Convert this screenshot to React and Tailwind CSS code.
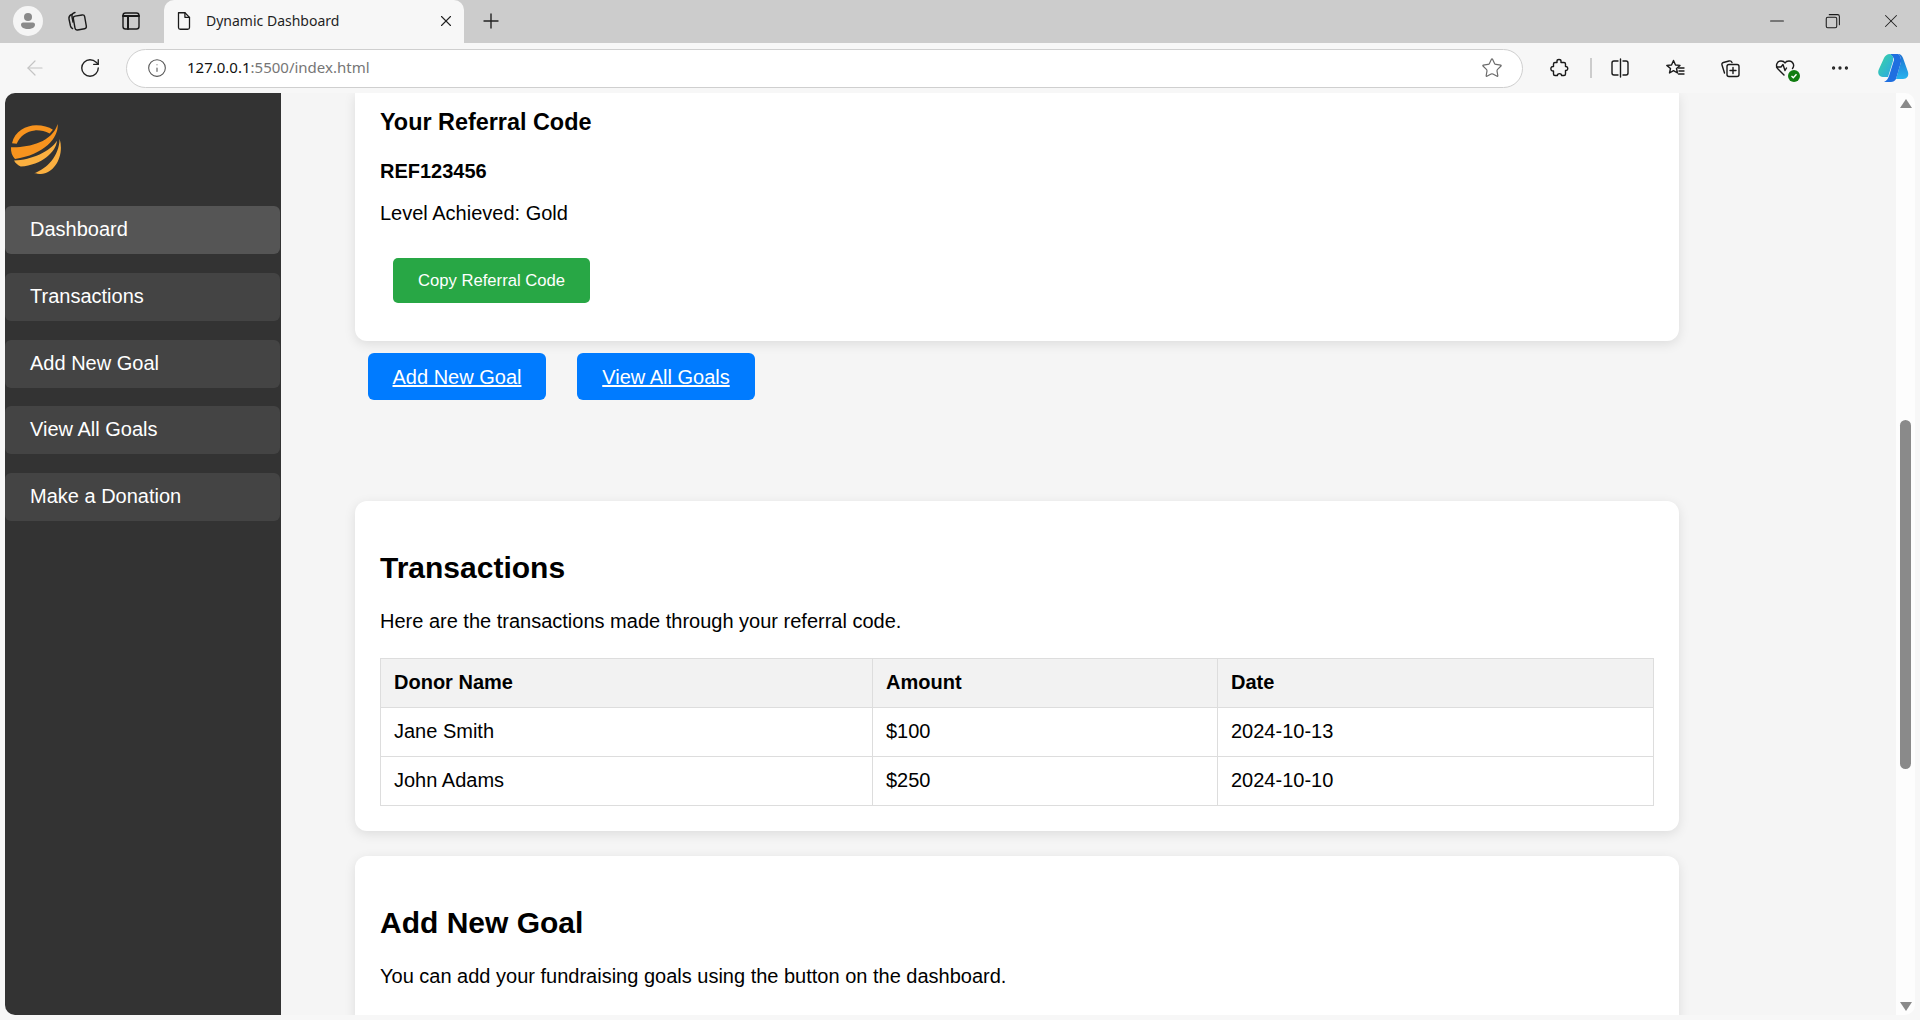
import { Plus, X, Minus, ArrowLeft, RotateCw, Info, Star, MoreHorizontal } from 'lucide-react';

const navItems = ['Dashboard', 'Transactions', 'Add New Goal', 'View All Goals', 'Make a Donation'];

const rows = [
  ['Jane Smith', '$100', '2024-10-13'],
  ['John Adams', '$250', '2024-10-10'],
];

// Drawn with the same stroke so the browser toolbar reads as one set
const Glyph = ({ children, size = 24, className = '' }) => (
  <svg width={size} height={size} viewBox="0 0 24 24" fill="none" stroke="#1a1a1a" strokeWidth="1.4" strokeLinecap="round" strokeLinejoin="round" className={className}>
    {children}
  </svg>
);

const Logo = () => (
  <svg width="52" height="52" viewBox="30 100 155 155" className="ml-[5px] block">
    <path d="M36 160 C44 125 78 107 108 107 C128 107 146 112 158 120 L148 131 C134 124 118 121 104 122 C80 124 60 138 50 162 Z" fill="#f7931e" />
    <path d="M33 172 C80 174 155 160 172 103 C176 145 130 195 45 207 C36 198 32 185 33 172 Z" fill="#f7931e" />
    <path d="M42 212 C95 210 150 185 170 153 C168 185 125 226 62 230 C54 226 46 220 42 212 Z" fill="#fbb040" />
    <path d="M103 250 C140 236 176 200 178 148 C192 195 165 250 122 252 C115 252 108 252 103 250 Z" fill="#fbb040" />
  </svg>
);

const TabStrip = () => (
  <div className="flex h-[43px] shrink-0 items-center bg-[#cccccc] pb-[2px]">
    <div className="ml-[13px] flex h-[30px] w-[30px] items-center justify-center rounded-full bg-[#f5f5f5]">
      <svg width="20" height="20" viewBox="0 0 20 20" fill="#8a8a8a">
        <circle cx="10" cy="6" r="4" />
        <path d="M3 13.5 C3 12 4.5 11.5 6 11.5 H14 C15.5 11.5 17 12 17 13.5 C17 16.5 14 18 10 18 C6 18 3 16.5 3 13.5 Z" />
      </svg>
    </div>
    <Glyph className="ml-[22px]">
      <rect x="9" y="6.5" width="11.5" height="14" rx="2.2" transform="rotate(-10 14.5 13)" />
      <path d="M6.5 5.5 C4.5 6.5 3.6 8 4 10 L5.5 17 C5.8 18.2 6.5 19 7.6 19.6" />
      <path d="M10 3.5 C8 4 6.6 5.5 7 8 L8 13" />
    </Glyph>
    <Glyph className="ml-[30px]">
      <rect x="4" y="4" width="16" height="16" rx="2.5" />
      <path d="M4 7 H20 M9 7 V20" strokeWidth="2" />
    </Glyph>
    <div className="-mb-[2px] ml-[21px] flex h-[43px] w-[300px] items-center rounded-t-[10px] bg-[#f7f7f7] pb-[2px] pl-[9px]">
      <Glyph size={22}>
        <path d="M6 3 H13 L18 8 V19 C18 20 17 21 16 21 H8 C7 21 6 20 6 19 Z" />
        <path d="M13 3 V8 H18" />
      </Glyph>
      <span className="ml-[11px] font-['Noto_Sans',sans-serif] text-[14px] text-[#1f1f1f]">Dynamic Dashboard</span>
      <X size={18} strokeWidth={1.5} color="#222" className="ml-auto mr-[9px]" />
    </div>
    <Plus size={24} strokeWidth={1.4} color="#222" className="ml-[15px]" />
    <Minus size={22} strokeWidth={1.1} color="#222" className="ml-auto mr-[36px]" />
    <Glyph size={18} className="mr-[38px]">
      <rect x="3" y="7" width="14" height="14" rx="2" />
      <path d="M7 3.5 H18 C19.5 3.5 20.5 4.5 20.5 6 V17" />
    </Glyph>
    <X size={22} strokeWidth={1.1} color="#222" className="mr-[18px]" />
  </div>
);

const Toolbar = () => (
  <div className="flex h-[50px] shrink-0 items-center bg-[#f7f7f7]">
    <ArrowLeft size={24} strokeWidth={1.2} color="#c4c4c4" className="ml-[23px]" />
    <RotateCw size={22} strokeWidth={1.5} color="#222" className="ml-[32px]" />
    <div className="ml-[25px] flex h-[39px] w-[1397px] items-center rounded-full border border-[#cfcfcf] bg-white pl-[20px]">
      <Info size={20} strokeWidth={1.3} color="#555" />
      <span className="ml-[20px] pb-[2px] font-['Noto_Sans',sans-serif] text-[15px] text-[#111]">
        127.0.0.1<span className="text-[#767676]">:5500/index.html</span>
      </span>
      <Star size={22} strokeWidth={1.3} color="#6b6b6b" className="ml-auto mr-[19px]" />
    </div>
    <Glyph className="ml-[24px]">
      <path d="M10 5 C10 3 14 3 14 5 V6.5 H17 C18 6.5 18.5 7 18.5 8 V10.5 C21.5 10 21.5 15 18.5 14.5 V18 C18.5 19 18 19.5 17 19.5 H14.5 C15 17 10 17 10.5 19.5 H8 C7 19.5 6.5 19 6.5 18 V15 C3 15.5 3 10 6.5 10.5 V8 C6.5 7 7 6.5 8 6.5 H10 Z" />
    </Glyph>
    <div className="ml-[19px] h-[20px] w-[2px] bg-[#cccccc]" />
    <Glyph className="ml-[16px]">
      <path d="M10 5 H6 C4.8 5 4 5.8 4 7 V17 C4 18.2 4.8 19 6 19 H10" />
      <path d="M15 5 H18 C19.2 5 20 5.8 20 7 V17 C20 18.2 19.2 19 18 19 H15" />
      <path d="M12.5 3 V21" />
    </Glyph>
    <Glyph className="ml-[31px]">
      <path d="M10.5 4.5 L12.5 9 L17 9.4 L13.5 12.5 L14.5 17 L10.5 14.6 L6.5 17 L7.5 12.5 L3.8 9.4 L8.5 9 Z" />
      <path d="M15.5 12 H21 M16 15 H21 M15.5 18 H21" />
    </Glyph>
    <Glyph className="ml-[31px]">
      <rect x="9" y="8.5" width="12" height="12" rx="2" />
      <path d="M15 11.5 V17.5 M12 14.5 H18" />
      <path d="M6.5 17 L4 9 C3.6 7.8 4.2 6.8 5.4 6.5 L11 5 C12.5 4.6 13.5 5.3 14 6.5" />
    </Glyph>
    <div className="relative ml-[31px] h-[24px] w-[24px]">
      <Glyph>
        <path d="M11 19 L5 13 C2 9.5 4 5 8 5 C10 5 11.5 6 12 7 C12.5 6 14 5 16 5 C20 5 22 9.5 19.5 12.5" />
        <path d="M3.5 11 H8 L10 8.5 L12 14.5 L13.5 12" />
      </Glyph>
      <div className="absolute bottom-[-2px] right-[-3px] flex h-[12px] w-[12px] items-center justify-center rounded-full bg-[#107c10]">
        <svg width="8" height="8" viewBox="0 0 8 8" fill="none" stroke="#fff" strokeWidth="1.4"><path d="M1.5 4 L3.3 5.7 L6.5 2.3" /></svg>
      </div>
    </div>
    <MoreHorizontal size={22} strokeWidth={1.6} color="#222" className="ml-[32px]" />
    <svg width="32" height="30" viewBox="0 0 32 30" className="ml-[26px]">
      <defs>
        <linearGradient id="cpA" x1="0" y1="0" x2="1" y2="1">
          <stop offset="0" stopColor="#3ad6a0" />
          <stop offset="1" stopColor="#2aa5e8" />
        </linearGradient>
        <linearGradient id="cpB" x1="0" y1="0" x2="0" y2="1">
          <stop offset="0" stopColor="#1b6fd0" />
          <stop offset="1" stopColor="#27b3ee" />
        </linearGradient>
      </defs>
      <path d="M21 1 C24 1 25 3 26 5 L31 19 C32 23 30 26 26 26 L19 26 L24 9 C24.5 5 23 2 21 1 Z" fill="url(#cpB)" />
      <path d="M13 1 H21 C23 2 24.5 5 24 9 L19 26 C18 28 16 29 14 29 H7 C9.5 28 11 26 12 23 L17 7 C17.5 5 15 3 13 1 Z" fill="#1f6fe0" />
      <path d="M13 1 C10 1 8 3 7 5 L2 16 C0 20 2 24 6 24 H11 L16 8 C17 4 15 2 13 1 Z" fill="url(#cpA)" />
    </svg>
  </div>
);

const Sidebar = () => (
  <aside className="flex w-[276px] shrink-0 flex-col bg-[#333333] pr-[1px] pt-[30px]">
    <Logo />
    <nav className="mt-[31px] flex flex-col gap-[18.75px]">
      {navItems.map((item, i) => (
        <a
          key={item}
          className={`flex h-[48px] items-center rounded-[6px] pb-[2px] pl-[25px] text-[20px] text-white ${i === 0 ? 'bg-[#555555]' : 'bg-[#444444]'}`}
        >
          {item}
        </a>
      ))}
    </nav>
  </aside>
);

const Scrollbar = () => (
  <div className="flex w-[19px] shrink-0 flex-col items-center bg-[#fdfdfd] pt-[6px]">
    <div className="h-0 w-0 border-x-[6.5px] border-b-[9px] border-x-transparent border-b-[#8a8a8a]" />
    <div className="mt-[312px] h-[349px] w-[11px] rounded-full bg-[#8a8a8a]" />
    <div className="mb-[4px] mt-auto h-0 w-0 border-x-[6.5px] border-t-[9px] border-x-transparent border-t-[#8a8a8a]" />
  </div>
);

const cardClass = 'w-[1324px] bg-white px-[25px] shadow-[0_3px_12px_rgba(0,0,0,0.1)]';

export default function App() {
  return (
    <div className="flex h-[1020px] w-[1920px] flex-col overflow-hidden bg-[#f7f7f7] font-['Liberation_Sans',Arial,sans-serif] text-black">
      <TabStrip />
      <Toolbar />
      <div className="mx-[5px] flex h-[922px] shrink-0 overflow-hidden rounded-[10px]">
        <Sidebar />
        <main className="flex-1 overflow-hidden bg-[#f5f5f5] pl-[74px]">
          <section className={`${cardClass} rounded-b-[12px] pb-[38px] pt-[16px]`}>
            <h3 className="text-[23.4px] font-bold leading-[27px]">Your Referral Code</h3>
            <p className="mt-[24px] text-[20px] font-bold leading-[23px]">REF123456</p>
            <p className="mt-[19px] text-[20px] leading-[23px]">Level Achieved: Gold</p>
            <button className="ml-[13px] mt-[33px] h-[45px] w-[197px] rounded-[5px] bg-[#28a745] text-[16.67px] text-white">
              Copy Referral Code
            </button>
          </section>

          <div className="ml-[13px] mt-[12px] flex gap-[31px]">
            <a className="flex h-[47px] w-[178px] items-center justify-center rounded-[6px] bg-[#007bff] text-[20px] text-white underline">Add New Goal</a>
            <a className="flex h-[47px] w-[178px] items-center justify-center rounded-[6px] bg-[#007bff] text-[20px] text-white underline">View All Goals</a>
          </div>

          <section className={`${cardClass} mt-[101px] rounded-[12px] pb-[25px] pt-[50px]`}>
            <h2 className="text-[30px] font-bold leading-[34px]">Transactions</h2>
            <p className="mt-[25px] text-[20px] leading-[23px]">Here are the transactions made through your referral code.</p>
            <table className="mt-[25px] w-[1274px] table-fixed border-collapse text-[20px]">
              <thead>
                <tr className="h-[49px] bg-[#f2f2f2]">
                  <th className="w-[492px] border border-[#dddddd] pb-[2px] pl-[13px] text-left font-bold">Donor Name</th>
                  <th className="w-[345px] border border-[#dddddd] pb-[2px] pl-[13px] text-left font-bold">Amount</th>
                  <th className="border border-[#dddddd] pb-[2px] pl-[13px] text-left font-bold">Date</th>
                </tr>
              </thead>
              <tbody>
                {rows.map((row) => (
                  <tr key={row[0]} className="h-[49px]">
                    {row.map((cell) => (
                      <td key={cell} className="border border-[#dddddd] pb-[2px] pl-[13px]">{cell}</td>
                    ))}
                  </tr>
                ))}
              </tbody>
            </table>
          </section>

          <section className={`${cardClass} mt-[25px] rounded-[12px] pb-[40px] pt-[50px]`}>
            <h2 className="text-[30px] font-bold leading-[34px]">Add New Goal</h2>
            <p className="mt-[25px] text-[20px] leading-[23px]">You can add your fundraising goals using the button on the dashboard.</p>
          </section>
        </main>
        <Scrollbar />
      </div>
    </div>
  );
}
